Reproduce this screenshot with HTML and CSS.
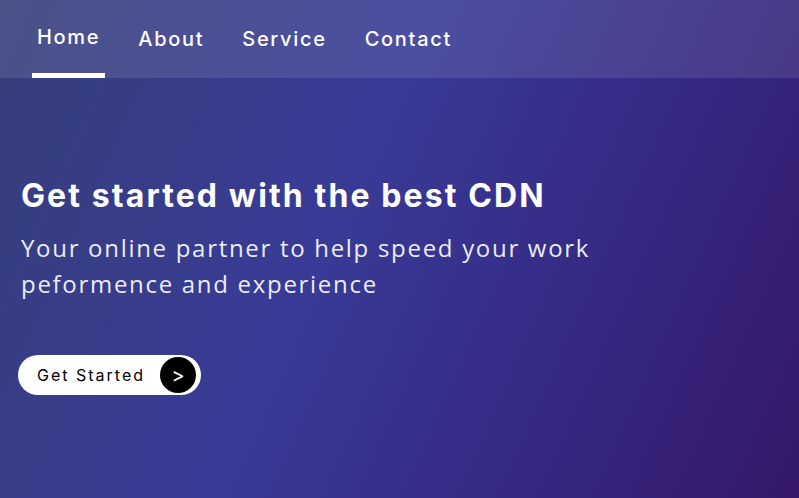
FILE: index.html
```html
<!DOCTYPE html>
<html lang="en">
<head>
<meta charset="utf-8">
<title>CDN</title>
<link rel="stylesheet" href="styles.css">
</head>
<body>
<div class="page">
  <nav class="nav">
    <ul class="nav-list">
      <li class="nav-item active"><a href="#">Home</a></li>
      <li class="nav-item"><a href="#">About</a></li>
      <li class="nav-item"><a href="#">Service</a></li>
      <li class="nav-item"><a href="#">Contact</a></li>
    </ul>
  </nav>
  <section class="hero">
    <h1 class="hero-title">Get started with the best CDN</h1>
    <p class="hero-text">Your online partner to help speed your work peformence and experience</p>
    <a class="cta" href="#"><span class="cta-label">Get Started</span><span class="cta-icon">&gt;</span></a>
  </section>
</div>
</body>
</html>
```
FILE: styles.css
```css
* { box-sizing: border-box; }
html, body { margin: 0; padding: 0; height: 100%; }
body {
  font-family: "Inter", "Liberation Sans", sans-serif;
  color: #fff;
  overflow: hidden;
}
.page {
  width: 100%;
  height: 100vh;
  background: linear-gradient(114deg, #363f7a 0%, #383b96 42%, #352a84 70%, #35186a 100%);
  display: flex;
  flex-direction: column;
}
.nav {
  height: 78px;
  background: rgba(255, 255, 255, 0.1);
  flex: none;
}
.nav-list {
  list-style: none;
  margin: 0;
  padding: 0 0 0 32px;
  display: flex;
  height: 100%;
  gap: 28px;
}
.nav-item {
  display: flex;
  align-items: center;
  padding: 0 5px;
  height: 100%;
  border-bottom: 5px solid transparent;
  padding-top: 4px;
}
.nav-item a {
  color: #fff;
  text-decoration: none;
  font-size: 20px;
  font-weight: 500;
  letter-spacing: 1.7px;
}
.nav-item.active {
  border-bottom-color: #fff;
}
.nav-item.active a { transform: translateY(-2px); }
.hero {
  padding: 0 21px;
  margin-top: 98px;
}
.hero-title {
  margin: 0;
  font-size: 32px;
  font-weight: 700;
  letter-spacing: 2.1px;
  line-height: 40px;
}
.hero-text {
  margin: 14px 0 0;
  font-family: "Open Sans", sans-serif;
  font-size: 24px;
  line-height: 36px;
  letter-spacing: 1.7px;
  color: #ebebf3;
  max-width: 640px;
}
.cta {
  margin: 53px 0 0 -3px;
  display: inline-flex;
  align-items: center;
  height: 40px;
  background: #fff;
  border-radius: 20px;
  padding: 0 5px 0 19px;
  text-decoration: none;
  color: #000;
}
.cta-label {
  font-size: 16px;
  letter-spacing: 2px;
  margin-right: 15px;
}
.cta-icon {
  width: 36px;
  height: 36px;
  border-radius: 50%;
  background: #000;
  color: #fff;
  display: flex;
  align-items: center;
  justify-content: center;
  font-size: 20px;
}
```
